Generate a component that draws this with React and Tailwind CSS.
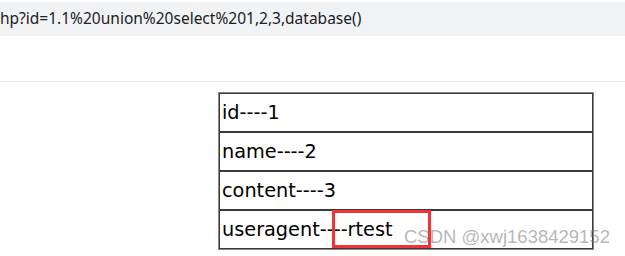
import React from 'react';

const rows = [
  { key: 'id', value: '1' },
  { key: 'name', value: '2' },
  { key: 'content', value: '3' },
  { key: 'useragent', value: 'rtest' },
];

const App = () => {
  return (
    <div className="relative w-[625px] h-[256px] bg-white overflow-hidden font-['Noto_Sans','Liberation_Sans',sans-serif]">
      {/* address bar */}
      <div className="mt-[2px] h-[34px] bg-[#f1f3f4] flex items-center">
        <span className="text-[15.5px] text-[#202124] whitespace-nowrap">
          hp?id=1.1%20union%20select%201,2,3,database()
        </span>
      </div>
      <div className="h-[46px] border-b border-[#e8e8e8]" />

      {/* query result */}
      <table className="mt-[10px] ml-[218px] w-[376px] border border-[#888] border-separate border-spacing-0">
        <tbody>
          {rows.map((row) => (
            <tr key={row.key}>
              <td className="h-[39px] border border-[#3a3a3a] px-[2px] pt-[1px] text-[19.3px] leading-none text-black whitespace-nowrap font-['DejaVu_Sans',sans-serif]">
                {row.key}----{row.value}
              </td>
            </tr>
          ))}
        </tbody>
      </table>

      {/* highlight box */}
      <div className="absolute left-[332px] top-[210px] w-[99px] h-[38px] border-[3px] border-[#ef3535]" />

      {/* watermark */}
      <div className="absolute left-[404px] top-[223px] text-[18.5px] text-[rgba(120,120,120,0.55)] font-['Liberation_Sans',sans-serif] whitespace-nowrap">
        CSDN @xwj1638429152
      </div>
    </div>
  );
};

export default App;
